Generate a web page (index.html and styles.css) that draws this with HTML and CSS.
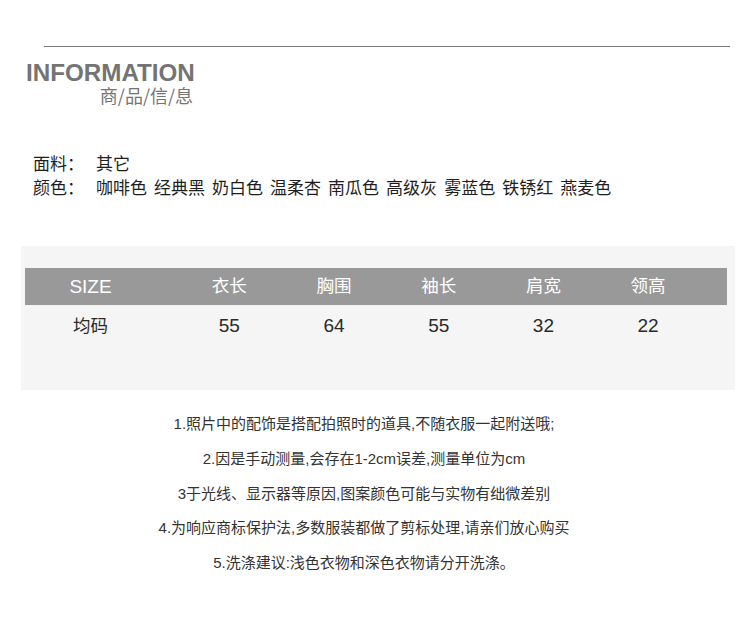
FILE: index.html
```html
<!DOCTYPE html>
<html>
<head>
<meta charset="utf-8">
<link rel="stylesheet" href="styles.css">
</head>
<body>
<div class="page">
  <div class="topline"></div>
  <div class="title">
    <div class="title-en">INFORMATION</div>
    <div class="title-cn">商/品/信/息</div>
  </div>
  <div class="props">
    <div class="prop"><span class="label">面料：</span><span>其它</span></div>
    <div class="prop"><span class="label">颜色：</span><span class="colors">咖啡色 经典黑 奶白色 温柔杏 南瓜色 高级灰 雾蓝色 铁锈红 燕麦色</span></div>
  </div>
  <div class="sizebox">
    <div class="row head">
      <div>SIZE</div><div class="cn">衣长</div><div class="cn">胸围</div><div class="cn">袖长</div><div class="cn">肩宽</div><div class="cn">领高</div>
    </div>
    <div class="row data">
      <div class="cn">均码</div><div>55</div><div>64</div><div>55</div><div>32</div><div>22</div>
    </div>
  </div>
  <div class="notes">
    <p>1.照片中的配饰是搭配拍照时的道具,不随衣服一起附送哦;</p>
    <p>2.因是手动测量,会存在1-2cm误差,测量单位为cm</p>
    <p>3于光线、显示器等原因,图案颜色可能与实物有绌微差别</p>
    <p>4.为响应商标保护法,多数服装都做了剪标处理,请亲们放心购买</p>
    <p>5.洗涤建议:浅色衣物和深色衣物请分开洗涤。</p>
  </div>
</div>
</body>
</html>
```
FILE: styles.css
```css
html, body {
  margin: 0;
  padding: 0;
  background: #fff;
}
.page {
  width: 750px;
  height: 623px;
  font-family: "Liberation Sans", "Noto Sans CJK SC", sans-serif;
  overflow: hidden;
}
.topline {
  margin: 46px 20px 0 44px;
  height: 1px;
  background: #7a7a7a;
}
.title {
  width: 168px;
  margin: 14px 0 0 26px;
  display: flex;
  flex-direction: column;
  align-items: flex-end;
  color: #747474;
}
.title-en {
  align-self: flex-start;
  font-weight: bold;
  font-size: 24.2px;
  line-height: 24px;
  white-space: nowrap;
}
.title-cn {
  font-family: "Noto Sans CJK SC", sans-serif;
  font-size: 18px;
  line-height: 20px;
  margin-right: 1px;
  white-space: nowrap;
}
.props {
  margin: 48px 0 0 33px;
  font-family: "Liberation Sans", "Noto Sans CJK SC", sans-serif;
  font-size: 17px;
  line-height: 24px;
  color: #1e1e1e;
}
.prop .label {
  display: inline-block;
  width: 63px;
}
.colors {
  word-spacing: 2.3px;
}
.sizebox {
  margin: 45px 15px 0 21px;
  height: 144px;
  background: #f5f5f5;
  padding: 22px 8px 0 4px;
  box-sizing: border-box;
}
.row {
  display: grid;
  grid-template-columns: 152px repeat(5, 104.7px);
  text-align: center;
  font-family: "Liberation Sans", "Noto Sans CJK SC", sans-serif;
  font-size: 19px;
}
.row > :first-child {
  padding-right: 21px;
}
.row .cn {
  font-size: 17.5px;
}
.row.head {
  background: #999;
  color: #fff;
  height: 37px;
  line-height: 37px;
}
.row.data {
  color: #2a2a2a;
  height: 40px;
  line-height: 42px;
}
.notes {
  margin-top: 17px;
  width: 728px;
  text-align: center;
  font-family: "Liberation Sans", "Noto Sans CJK SC", sans-serif;
  font-size: 15px;
  color: #333;
}
.notes p {
  margin: 0;
  height: 34.75px;
  line-height: 34.75px;
}
```
